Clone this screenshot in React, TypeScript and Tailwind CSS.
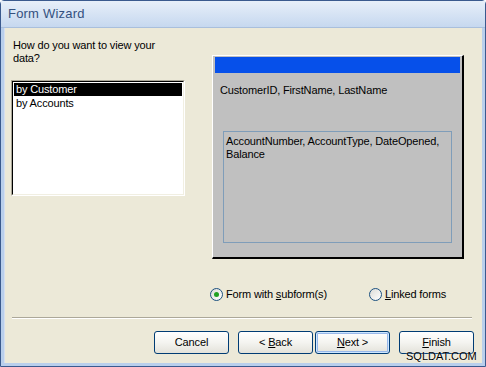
import React from 'react';

const FONT = { fontFamily: '"Liberation Sans", Arial, sans-serif' };

function Radio({ checked }: { checked?: boolean }) {
  return (
    <span className="relative inline-flex w-[13px] h-[13px] rounded-full border border-[#1c5180] bg-gradient-to-br from-[#dcdcd7] to-white items-center justify-center">
      {checked && <span className="w-[5px] h-[5px] rounded-full bg-[#21a121]" />}
    </span>
  );
}

function WizButton({ children, focused }: { children: React.ReactNode; focused?: boolean }) {
  return (
    <button
      className={`w-[75px] h-[23px] rounded-[3px] border border-[#003c74] bg-gradient-to-b from-white via-[#f4f4f0] to-[#e3e2da] text-[11px] text-black flex items-center justify-center ${
        focused ? 'shadow-[inset_0_0_0_1px_#cee7ff,inset_0_0_0_2px_#98b8ea]' : ''
      }`}
    >
      <span>{children}</span>
    </button>
  );
}

export default function App() {
  return (
    <div className="w-[486px] h-[367px] relative overflow-hidden" style={FONT}>
      <div className="w-full h-full flex flex-col border border-[#3a5a8e] bg-[#b9cfec] rounded-t-[4px]">
        {/* title bar */}
        <div className="h-[27px] shrink-0 bg-gradient-to-b from-[#e7eff9] to-[#c6d8ef] border-b border-[#a9bfdc] flex items-center pl-[7px]">
          <span className="text-[13px] text-[#34517f] tracking-[0.2px]">Form Wizard</span>
        </div>

        {/* body */}
        <div className="flex-1 mx-[3px] mb-[3px] bg-[#ece9d8] border-l border-[#d5dff0] flex flex-col text-[11px] text-black leading-[13px] tracking-[-0.15px]">
          <div className="flex items-start h-[231px]">
            <div className="ml-[6px] mt-[11px] w-[174px] flex flex-col">
              <p className="pl-[2px] w-[160px]">How do you want to view your data?</p>
              <div className="mt-[15px] h-[116px] border-t border-l border-[#aca899] border-r border-b border-r-white border-b-white">
                <div className="h-full bg-white border-t border-l border-black border-r border-b border-r-[#f1efe2] border-b-[#f1efe2] pt-[1px] px-[1px]">
                  <div className="h-[13px] bg-black text-white pl-[2px]">by Customer</div>
                  <div className="h-[13px] pl-[2px] mt-[1px]">by Accounts</div>
                </div>
              </div>
            </div>

            <div className="ml-[27px] mt-[27px] w-[252px] h-[204px] bg-[#c0c0c0] border-t border-l border-white border-r-2 border-b-2 border-r-black border-b-black flex flex-col">
              <div className="ml-[2px] mt-[1px] w-[245px] h-[16px] bg-[#0650ea]" />
              <div className="ml-[7px] mt-[11px]">CustomerID, FirstName, LastName</div>
              <div className="ml-[10px] mt-[34px] w-[229px] h-[112px] border border-[#7f9db9] pl-[2px] pt-[3px]">
                AccountNumber, AccountType, DateOpened, Balance
              </div>
            </div>
          </div>

          <div className="flex items-center h-[14px] mt-[28px]">
            <div className="ml-[205px] flex items-center gap-[3px]">
              <Radio checked />
              <span>Form with <u>s</u>ubform(s)</span>
            </div>
            <div className="ml-[42px] flex items-center gap-[3px]">
              <Radio />
              <span><u>L</u>inked forms</span>
            </div>
          </div>

          <div className="mt-[16px] ml-[7px] w-[460px] h-[2px] border-t border-[#aca899] border-b border-b-white" />

          <div className="mt-[12px] flex items-center">
            <div className="ml-[149px]">
              <WizButton>Cancel</WizButton>
            </div>
            <div className="ml-[9px]">
              <WizButton>&lt; <u>B</u>ack</WizButton>
            </div>
            <div className="ml-[2px]">
              <WizButton focused><u>N</u>ext &gt;</WizButton>
            </div>
            <div className="ml-[9px]">
              <WizButton><u>F</u>inish</WizButton>
            </div>
          </div>
        </div>
      </div>

      <span className="absolute left-[406px] top-[350px] text-[11px] leading-[12px] text-black [text-shadow:0_0_2px_white]">
        SQLDAT.COM
      </span>
    </div>
  );
}
